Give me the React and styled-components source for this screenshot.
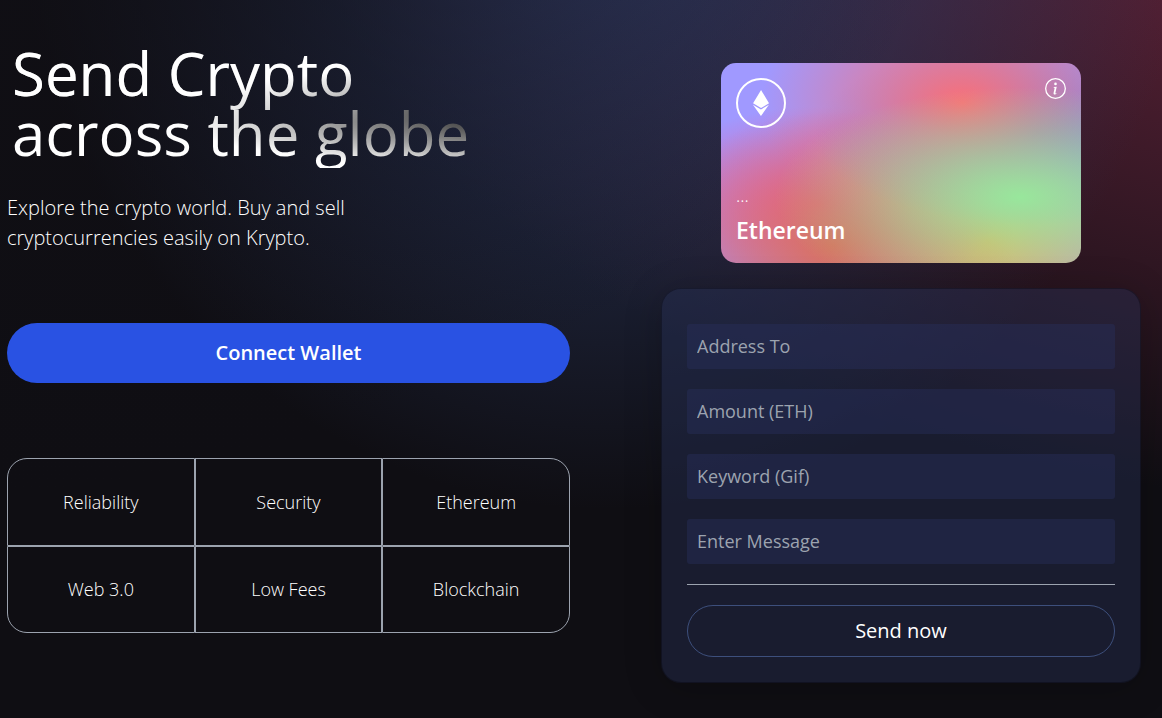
import React from "react";
import styled, { createGlobalStyle } from "styled-components";
import { SiEthereum } from "react-icons/si";
import { BsInfoCircle } from "react-icons/bs";

const GlobalStyle = createGlobalStyle`
  *, *::before, *::after { box-sizing: border-box; }
  html { background: #0f0e13; }
  body {
    margin: 0;
    color: #fff;
    font-family: "Open Sans", "Noto Sans", sans-serif;
    font-size: 20px;
    line-height: 30px;
  }
  h1, h2, p, ul { margin: 0; padding: 0; }
  button, input { font: inherit; color: inherit; }
`;

const Hero = styled.main`
  min-height: 100vh;
  display: grid;
  grid-template-columns: minmax(0, 1fr) 480px;
  column-gap: 91px;
  align-items: start;
  padding: 38px 21px 35px 7px;
  background-color: #0f0e13;
  background-image:
    radial-gradient(ellipse 99% 92% at -17% -21%, hsl(253, 16%, 7%) 0, transparent 100%),
    radial-gradient(ellipse 51% 92% at 52% -21%, hsl(225, 39%, 30%) 0, transparent 100%),
    radial-gradient(ellipse 99% 92% at 125% -21%, hsl(339, 49%, 30%) 0, transparent 100%);

  @media (max-width: 900px) {
    grid-template-columns: minmax(0, 1fr);
    padding-right: 7px;
  }
`;

const Intro = styled.section`
  display: flex;
  flex-direction: column;
  align-items: flex-start;
  padding-top: 1px;
`;

const Title = styled.h1`
  width: 100%;
  padding: 4px 5px 5px;
  font-size: 60px;
  line-height: 60px;
  font-weight: 400;
  background-color: #fff;
  background-image:
    radial-gradient(at 4% 36%, #fff 0, transparent 53%),
    radial-gradient(at 100% 60%, #000 0, transparent 50%);
  -webkit-background-clip: text;
  background-clip: text;
  -webkit-text-fill-color: transparent;
`;

const Lead = styled.p`
  margin-top: 25px;
  font-weight: 300;
`;

const ConnectButton = styled.button`
  width: 100%;
  height: 60px;
  margin: 70px 0 75px;
  border: 0;
  border-radius: 30px;
  background: #2952e3;
  font-weight: 600;
  cursor: pointer;
`;

const Features = styled.ul`
  width: 100%;
  height: 175px;
  display: grid;
  grid-template-columns: repeat(3, 1fr);
  grid-template-rows: repeat(2, 1fr);
  list-style: none;
`;

const Feature = styled.li`
  display: flex;
  align-items: center;
  justify-content: center;
  border: 1px solid #9ca3af;
  border-radius: ${({ $corner }) => $corner || "0"};
  font-size: 18px;
  line-height: 28px;
  font-weight: 300;
`;

const Transfer = styled.section`
  display: flex;
  flex-direction: column;
  align-items: center;
  padding-top: 25px;
`;

const Card = styled.article`
  width: 360px;
  max-width: 100%;
  height: 200px;
  display: flex;
  flex-direction: column;
  justify-content: space-between;
  padding: 15px;
  border-radius: 15px;
  background-color: #a099ff;
  background-image:
    radial-gradient(at 83% 67%, rgb(152, 231, 156) 0, transparent 58%),
    radial-gradient(at 67% 20%, hsl(357, 94%, 71%) 0, transparent 59%),
    radial-gradient(at 88% 35%, hsl(222, 81%, 65%) 0, transparent 50%),
    radial-gradient(at 31% 91%, hsl(9, 61%, 61%) 0, transparent 52%),
    radial-gradient(at 27% 71%, hsl(336, 91%, 65%) 0, transparent 49%),
    radial-gradient(at 74% 89%, hsl(30, 98%, 65%) 0, transparent 51%),
    radial-gradient(at 53% 75%, hsl(174, 94%, 68%) 0, transparent 45%);
`;

const CardTop = styled.div`
  display: flex;
  justify-content: space-between;
  align-items: flex-start;
`;

const Coin = styled.span`
  width: 50px;
  height: 50px;
  display: flex;
  align-items: center;
  justify-content: center;
  border: 2px solid #fff;
  border-radius: 50%;
`;

const Address = styled.p`
  font-size: 18px;
  line-height: 25px;
  font-weight: 300;
`;

const CardName = styled.h2`
  margin-top: 5px;
  font-size: 23px;
  line-height: 35px;
  font-weight: 600;
`;

const Form = styled.form`
  width: 100%;
  display: flex;
  flex-direction: column;
  gap: 20px;
  margin-top: 25px;
  padding: 35px 25px 25px;
  border: 1px solid rgba(0, 0, 0, 0.3);
  border-radius: 20px;
  background: rgba(39, 51, 89, 0.4);
  box-shadow: 0 5px 38px rgba(0, 0, 0, 0.2);
`;

const Field = styled.input`
  width: 100%;
  height: 45px;
  padding: 0 10px 2px;
  border: 0;
  border-radius: 3px;
  outline: 0;
  background: rgba(39, 47, 91, 0.45);
  font-size: 18px;
  &::placeholder { color: #9ca3af; opacity: 1; }
`;

const Divider = styled.hr`
  width: 100%;
  height: 1px;
  margin: 0;
  border: 0;
  background: #9ca3af;
`;

const SendButton = styled.button`
  height: 52px;
  border: 1px solid #3d4f7c;
  border-radius: 26px;
  background: transparent;
  cursor: pointer;
`;

const features = [
  { label: "Reliability", corner: "20px 0 0 0" },
  { label: "Security" },
  { label: "Ethereum", corner: "0 20px 0 0" },
  { label: "Web 3.0", corner: "0 0 0 20px" },
  { label: "Low Fees" },
  { label: "Blockchain", corner: "0 0 20px 0" },
];

const fields = [
  { name: "addressTo", label: "Address To", type: "text" },
  { name: "amount", label: "Amount (ETH)", type: "text" },
  { name: "keyword", label: "Keyword (Gif)", type: "text" },
  { name: "message", label: "Enter Message", type: "text" },
];

export default function App() {
  return (
    <>
      <GlobalStyle />
      <Hero>
        <Intro>
          <Title>
            Send Crypto
            <br />
            across the globe
          </Title>
          <Lead>
            Explore the crypto world. Buy and sell
            <br />
            cryptocurrencies easily on Krypto.
          </Lead>
          <ConnectButton type="button">Connect Wallet</ConnectButton>
          <Features>
            {features.map(({ label, corner }) => (
              <Feature key={label} $corner={corner}>{label}</Feature>
            ))}
          </Features>
        </Intro>
        <Transfer>
          <Card>
            <CardTop>
              <Coin><SiEthereum size={26} aria-hidden="true" /></Coin>
              <BsInfoCircle size={21} aria-hidden="true" />
            </CardTop>
            <div>
              <Address>...</Address>
              <CardName>Ethereum</CardName>
            </div>
          </Card>
          <Form onSubmit={(event) => event.preventDefault()}>
            {fields.map(({ name, label, type }) => (
              <Field key={name} name={name} type={type} placeholder={label} aria-label={label} />
            ))}
            <Divider />
            <SendButton type="submit">Send now</SendButton>
          </Form>
        </Transfer>
      </Hero>
    </>
  );
}
